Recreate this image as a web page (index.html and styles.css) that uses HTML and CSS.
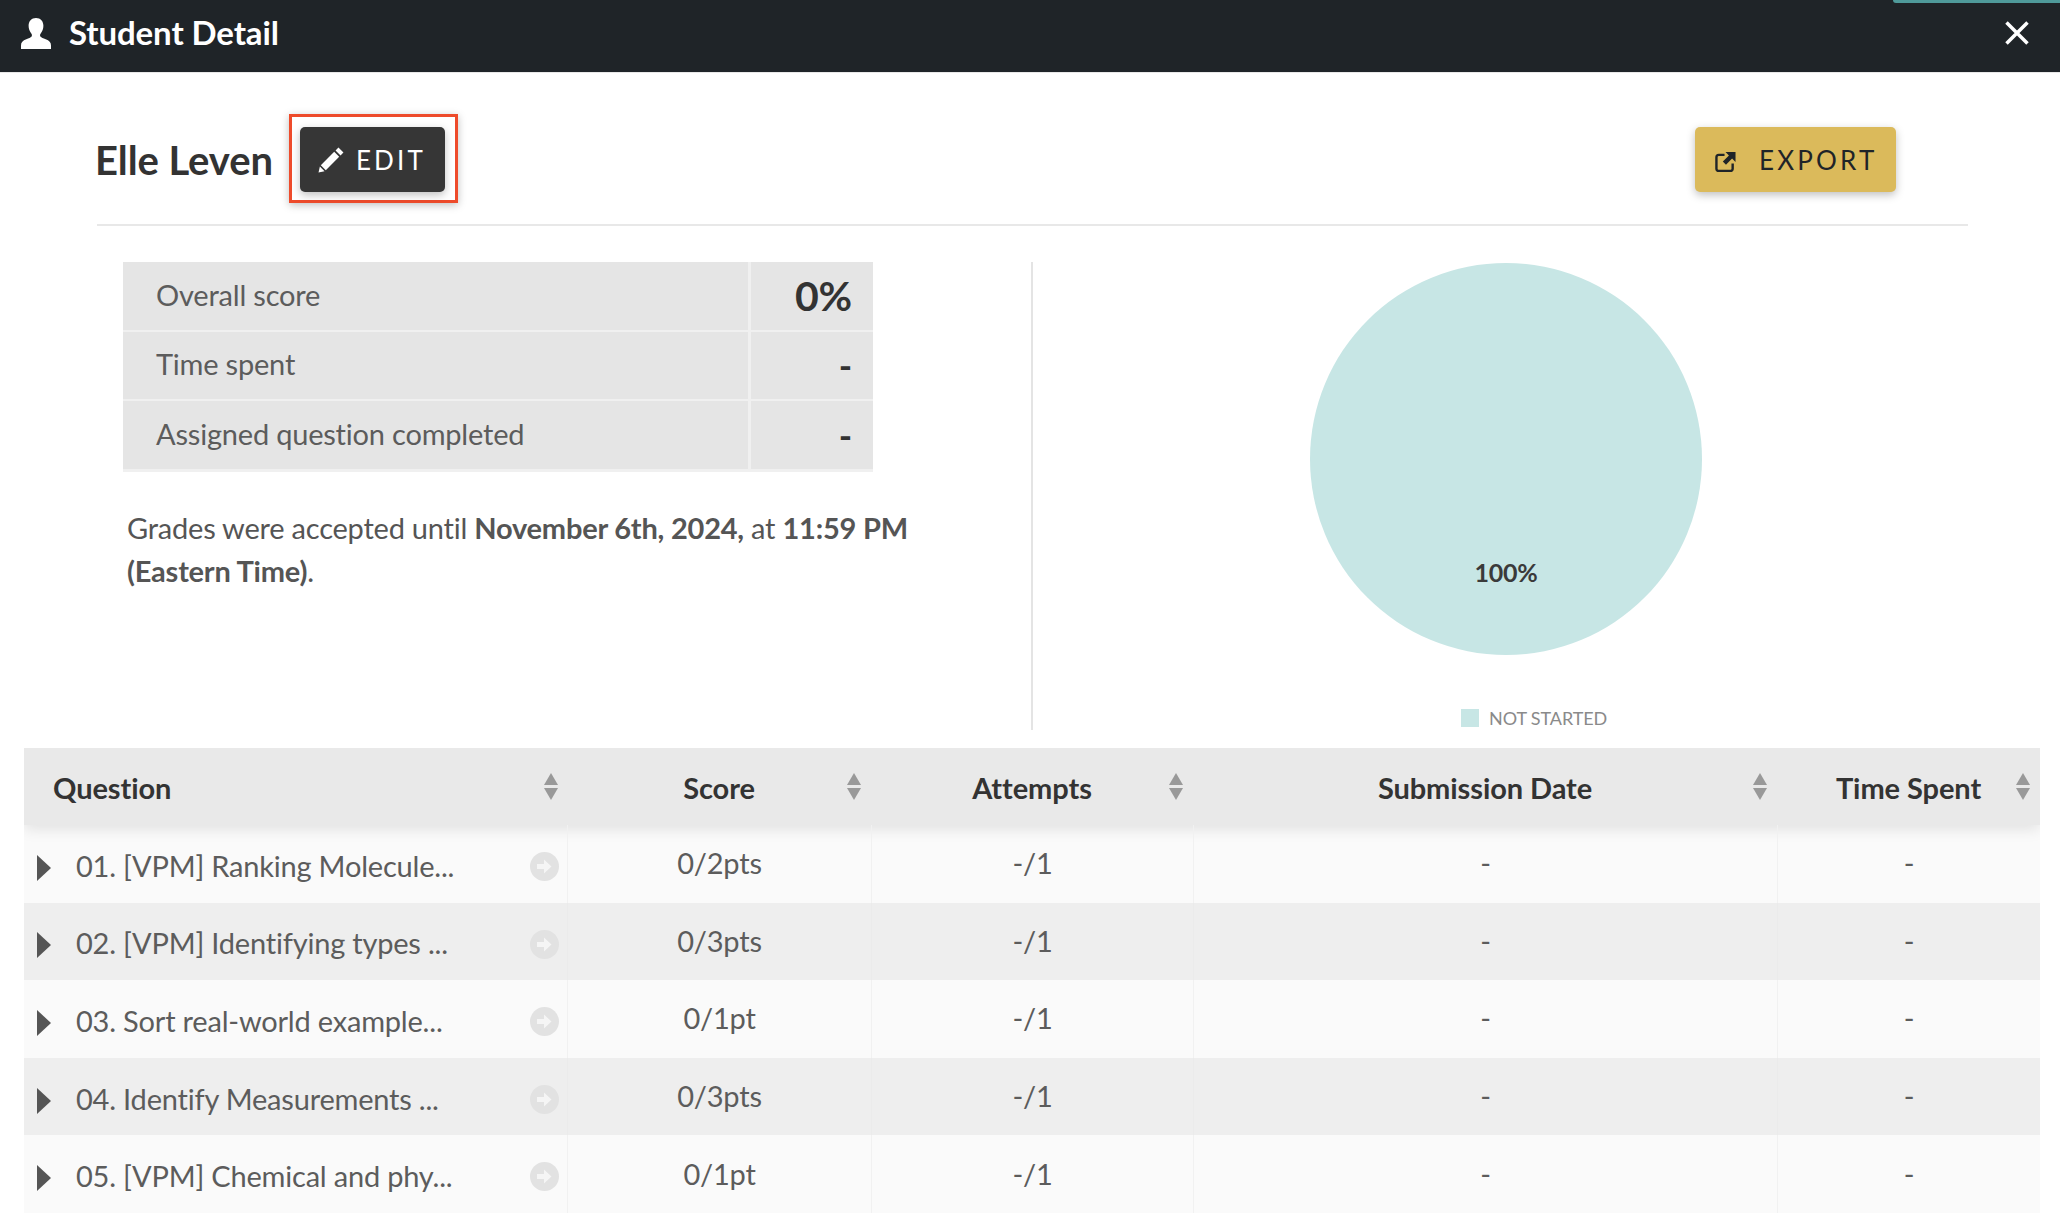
FILE: index.html
```html
<!DOCTYPE html>
<html lang="en">
<head>
    <meta charset="UTF-8">
    <title>Student Detail</title>
    <link rel="stylesheet" href="styles.css">
</head>
<body>

    <header class="topbar">
        <span class="topbar-accent"></span>
        <svg class="topbar-user" viewBox="0 0 32 32"><path d="M16 1c-4.600 0-7.400 3.300-7.400 7.800 0 3 1.100 5.800 2.700 7.600.8 1 .9 2.400.1 3.400-.8.900-2.400 1.400-5.100 2.400C2.800 23.600 1 25.200 1 28.500V32h30v-3.500c0-3.300-1.800-4.900-5.300-6.300-2.700-1-4.300-1.500-5.100-2.400-.8-1-.7-2.400.1-3.400 1.600-1.800 2.700-4.600 2.700-7.600C23.400 4.300 20.600 1 16 1z"/></svg>
        <h2 class="topbar-title">Student Detail</h2>
        <svg class="topbar-close" viewBox="0 0 24 24"><path d="M1.500 1.500l21 21M22.500 1.500l-21 21"/></svg>
    </header>

    <main>
        <div class="student-head">
            <h1 class="student-name">Elle Leven</h1>
            <div class="edit-mark">
                <button class="btn btn-edit">
                    <svg class="btn-icon" viewBox="0 0 26 26"><path d="M19.700 1.500l4.800 4.800-2.800 2.800-4.800-4.800zM15.600 5.600l4.800 4.800L7.500 23.300l-4.800-4.800zM1.800 19.800l4.500 4.500-5.800 1.300z"/></svg>
                    EDIT
                </button>
            </div>
            <button class="btn btn-export">
                <svg class="btn-icon-export" viewBox="0 0 22 22"><path class="export-box" d="M10 4H4a2.500 2.500 0 0 0-2.500 2.500v12A2.500 2.500 0 0 0 4 21h12a2.500 2.500 0 0 0 2.500-2.500V13"/><path class="export-arrow" d="M11 1h10.500v10.500l-3.600-3.600-6.400 6.400-3.300-3.300 6.400-6.400z"/></svg>
                EXPORT
            </button>
        </div>

        <section class="summary">
            <div class="summary-left">
                <div class="stats">
                    <div class="stats-label">Overall score</div>
                    <div class="stats-value stats-big">0%</div>
                    <div class="stats-label">Time spent</div>
                    <div class="stats-value">-</div>
                    <div class="stats-label">Assigned question completed</div>
                    <div class="stats-value">-</div>
                </div>
                <p class="grades-note">Grades were accepted until <b>November 6th, 2024,</b> at <b>11:59 PM (Eastern Time)</b>.</p>
            </div>
            <div class="summary-right">
                <div class="pie"><span class="pie-label">100%</span></div>
                <div class="legend"><span class="legend-box"></span>NOT STARTED</div>
            </div>
        </section>

        <section class="grid">
            <div class="grid-row grid-head">
                <div class="cell cell-left">Question<span class="sort"></span></div>
                <div class="cell">Score<span class="sort"></span></div>
                <div class="cell">Attempts<span class="sort"></span></div>
                <div class="cell">Submission Date<span class="sort"></span></div>
                <div class="cell">Time Spent<span class="sort"></span></div>
            </div>
            <div class="grid-row">
                <div class="cell cell-q"><span class="caret"></span><span class="q-name">01. [VPM] Ranking Molecule...</span><svg class="go" viewBox="0 0 29 29"><circle cx="14.500" cy="14.500" r="14.500"/><path d="M7 12h7V7.500l7.500 7-7.500 7V17H7z"/></svg></div>
                <div class="cell">0/2pts</div><div class="cell">-/1</div><div class="cell">-</div><div class="cell">-</div>
            </div>
            <div class="grid-row">
                <div class="cell cell-q"><span class="caret"></span><span class="q-name">02. [VPM] Identifying types ...</span><svg class="go" viewBox="0 0 29 29"><circle cx="14.500" cy="14.500" r="14.500"/><path d="M7 12h7V7.500l7.500 7-7.500 7V17H7z"/></svg></div>
                <div class="cell">0/3pts</div><div class="cell">-/1</div><div class="cell">-</div><div class="cell">-</div>
            </div>
            <div class="grid-row">
                <div class="cell cell-q"><span class="caret"></span><span class="q-name">03. Sort real-world example...</span><svg class="go" viewBox="0 0 29 29"><circle cx="14.500" cy="14.500" r="14.500"/><path d="M7 12h7V7.500l7.500 7-7.500 7V17H7z"/></svg></div>
                <div class="cell">0/1pt</div><div class="cell">-/1</div><div class="cell">-</div><div class="cell">-</div>
            </div>
            <div class="grid-row">
                <div class="cell cell-q"><span class="caret"></span><span class="q-name">04. Identify Measurements ...</span><svg class="go" viewBox="0 0 29 29"><circle cx="14.500" cy="14.500" r="14.500"/><path d="M7 12h7V7.500l7.500 7-7.500 7V17H7z"/></svg></div>
                <div class="cell">0/3pts</div><div class="cell">-/1</div><div class="cell">-</div><div class="cell">-</div>
            </div>
            <div class="grid-row">
                <div class="cell cell-q"><span class="caret"></span><span class="q-name">05. [VPM] Chemical and phy...</span><svg class="go" viewBox="0 0 29 29"><circle cx="14.500" cy="14.500" r="14.500"/><path d="M7 12h7V7.500l7.500 7-7.500 7V17H7z"/></svg></div>
                <div class="cell">0/1pt</div><div class="cell">-/1</div><div class="cell">-</div><div class="cell">-</div>
            </div>
        </section>
    </main>

</body>
</html>
```

FILE: styles.css
```css
* {
    box-sizing: border-box;
}

body {
    margin: 0;
    height: 1224px;
    overflow: hidden;
    background-color: white;
    font-family: 'Lato', sans-serif;
    color: #333;
}

.topbar {
    position: relative;
    display: flex;
    align-items: center;
    height: 73px;
    padding: 0 31px 6px 20px;
    background-color: #1f2428;
    border-bottom: 1px solid #e8e8e8;
}

.topbar-accent {
    position: absolute;
    top: 0;
    right: 0;
    width: 167px;
    height: 3px;
    background-color: #4f9a9a;
    border-bottom-left-radius: 3px;
}

.topbar-user {
    width: 32px;
    height: 32px;
    fill: white;
}

.topbar-title {
    margin: 0 0 2px 17px;
    font-size: 33px;
    font-weight: 700;
    letter-spacing: -0.1px;
    color: white;
}

.topbar-close {
    margin-left: auto;
    width: 24px;
    height: 24px;
    fill: none;
    stroke: white;
    stroke-width: 3.500;
}

.student-head {
    display: flex;
    align-items: center;
    height: 153px;
    margin: 0 92px 0 97px;
    padding: 22px 72px 0 0;
    border-bottom: 2px solid #e8e8e8;
}

.student-name {
    margin: 0 16px 0 -2px;
    font-size: 40px;
    font-weight: 700;
    letter-spacing: -0.1px;
    color: #333;
}

.edit-mark {
    margin-bottom: 2px;
    padding: 10px 10px 8px 8px;
    border: 3px solid #ee4b2b;
    box-shadow: 0 2px 8px rgba(0, 0, 0, 0.25);
}

.btn {
    display: flex;
    align-items: center;
    height: 65px;
    border: none;
    border-radius: 5px;
    font-family: 'Lato', sans-serif;
    font-size: 26px;
    letter-spacing: 3.200px;
    box-shadow: 0 3px 8px rgba(0, 0, 0, 0.25);
}

.btn-edit {
    width: 145px;
    padding: 0 0 0 18px;
    background-color: #363636;
    color: white;
}

.btn-icon {
    width: 27px;
    height: 27px;
    margin-right: 11px;
    fill: white;
}

.btn-export {
    width: 201px;
    margin-left: auto;
    padding: 0 0 0 20px;
    background-color: #dbba5b;
    color: #1f2428;
}

.btn-icon-export {
    width: 21px;
    height: 21px;
    margin: 3px 23px 0 0;
}

.export-box {
    fill: none;
    stroke: #1f2428;
    stroke-width: 2.500;
}

.export-arrow {
    fill: #1f2428;
}

.summary {
    display: flex;
    height: 522px;
}

.summary-left {
    width: 1033px;
    height: 468px;
    margin-top: 36px;
    padding-left: 123px;
    border-right: 2px solid #e4e4e4;
}

.stats {
    display: grid;
    grid-template-columns: 625px 122px;
    column-gap: 3px;
    row-gap: 2px;
    width: 750px;
    padding: 0 0 3px;
    background-color: #f0f0f0;
}

.stats-label,
.stats-value {
    display: flex;
    align-items: center;
    height: 67.500px;
    background-color: #e5e5e5;
    font-size: 29px;
    letter-spacing: -0.2px;
}

.stats-label {
    padding: 0 0 3px 33px;
    color: #5c5c5c;
}

.stats-value {
    justify-content: flex-end;
    padding-right: 21px;
    font-size: 36px;
    font-weight: 700;
}

.stats-big {
    font-size: 41px;
}

.grades-note {
    width: 800px;
    margin: 34px 0 0 4px;
    font-size: 29px;
    line-height: 43px;
    letter-spacing: -0.22px;
    color: #555;
}

.grades-note b {
    font-weight: 700;
}

.summary-right {
    flex: 1;
    padding: 37px 0 0 277px;
}

.pie {
    position: relative;
    width: 392px;
    height: 392px;
    border-radius: 50%;
    background-color: #c7e6e5;
}

.pie-label {
    position: absolute;
    left: 0;
    right: 0;
    top: 294px;
    font-size: 25px;
    font-weight: 700;
    letter-spacing: -0.3px;
    text-align: center;
    color: #3a3a3a;
}

.legend {
    display: flex;
    align-items: center;
    margin: 52px 0 0 151px;
    font-size: 18px;
    letter-spacing: -0.1px;
    color: #8a8a8a;
}

.legend-box {
    width: 18px;
    height: 18px;
    margin-right: 10px;
    background-color: #c7e6e5;
}

.grid {
    margin: 0 20px 0 24px;
    overflow: hidden;
}

.grid-row {
    display: grid;
    grid-template-columns: 543px 304px 322px 584px 263px;
    height: 77.600px;
    background-color: #fafafa;
    color: #5c5c5c;
    font-size: 29px;
    letter-spacing: -0.2px;
}

.grid-row:nth-child(odd) {
    background-color: #eeeeee;
}

.grid-head,
.grid-row.grid-head {
    position: relative;
    height: 77px;
    background-color: #e9e9e9;
    color: #333;
    font-weight: 700;
    letter-spacing: -0.08px;
    box-shadow: 0 4px 14px rgba(0, 0, 0, 0.1);
}

.cell {
    position: relative;
    display: flex;
    align-items: center;
    justify-content: center;
    padding-bottom: 2px;
    border-left: 1px solid #f1f1f1;
}

.cell:first-child {
    border-left: none;
}

.grid-row:nth-child(odd) .cell {
    border-left-color: #ebebeb;
}

.grid-head .cell {
    border-left: none;
    padding: 2px 0 0;
}

.grid-head .cell-left {
    justify-content: flex-start;
    padding-left: 29px;
}

.cell-q {
    justify-content: flex-start;
    padding: 0 0 0 13px;
}

.sort {
    position: absolute;
    top: 25px;
    right: 9px;
    width: 15px;
    height: 27px;
}

.cell-left .sort {
    right: 8px;
}

.sort::before,
.sort::after {
    content: "";
    position: absolute;
    left: 0;
    border-left: 7.500px solid transparent;
    border-right: 7.500px solid transparent;
}

.sort::before {
    top: 0;
    border-bottom: 12px solid #999;
}

.sort::after {
    bottom: 0;
    border-top: 12px solid #999;
}

.caret {
    width: 0;
    height: 0;
    margin-top: 8px;
    border-top: 13.500px solid transparent;
    border-bottom: 13.500px solid transparent;
    border-left: 14px solid #555;
}

.q-name {
    margin: 3px 0 0 25px;
}

.go {
    position: absolute;
    top: 27px;
    right: 8px;
    width: 29px;
    height: 29px;
    fill: #f5f5f5;
}

.go circle {
    fill: #e2e2e2;
}
```
